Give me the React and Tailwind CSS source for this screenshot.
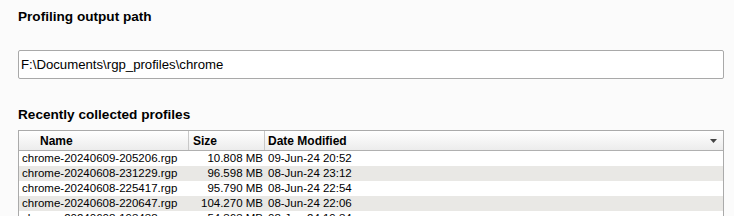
import React from 'react'

const profiles = [
  { name: 'chrome-20240609-205206.rgp', size: '10.808 MB', date: '09-Jun-24 20:52' },
  { name: 'chrome-20240608-231229.rgp', size: '96.598 MB', date: '08-Jun-24 23:12' },
  { name: 'chrome-20240608-225417.rgp', size: '95.790 MB', date: '08-Jun-24 22:54' },
  { name: 'chrome-20240608-220647.rgp', size: '104.270 MB', date: '08-Jun-24 22:06' },
  { name: 'chrome-20240608-193438.rgp', size: '54.363 MB', date: '08-Jun-24 19:34' }
]

export default function App() {
  return (
    <div className="w-[734px] h-[216px] overflow-hidden bg-[#fbfbfb] text-black font-['Liberation_Sans',Arial,sans-serif] px-[18px] pt-[9px]">
      {/* Output path */}
      <h2 className="text-[13.6px] font-bold leading-[16px]">Profiling output path</h2>
      <div className="mt-[25px] w-[706px] h-[29px] flex items-center bg-white border border-[#a9a9a9] rounded-[2px] pl-[2px] text-[13.2px]">
        F:\Documents\rgp_profiles\chrome
      </div>

      {/* Recent profiles */}
      <h2 className="mt-[28px] text-[13.6px] font-bold leading-[16px]">Recently collected profiles</h2>
      <div className="mt-[7px] w-[706px] border border-[#aaaaaa] bg-white text-[11.5px]">
        <div className="flex h-[20px] items-center bg-gradient-to-b from-white to-[#ececec] border-b border-[#b0b0b0] text-[12px] font-bold">
          <div className="w-[170px] pl-[21px] border-r border-[#c8c8c8] h-full flex items-center">Name</div>
          <div className="w-[76px] pl-[4px] border-r border-[#c8c8c8] h-full flex items-center">Size</div>
          <div className="flex-1 pl-[3px] h-full flex items-center">Date Modified</div>
          <svg width="7" height="4" viewBox="0 0 7 4" className="mr-[6px]">
            <path d="M0 0h7L3.5 4z" fill="#444" />
          </svg>
        </div>
        {profiles.map((p, i) => (
          <div
            key={p.name}
            className={`flex h-[15px] items-center leading-[15px] ${i % 2 === 1 ? 'bg-[#e9e8e5]' : 'bg-white'}`}
          >
            <div className="w-[170px] pl-[3px]">{p.name}</div>
            <div className="w-[74px] text-right">{p.size}</div>
            <div className="pl-[5px]">{p.date}</div>
          </div>
        ))}
      </div>
    </div>
  )
}
